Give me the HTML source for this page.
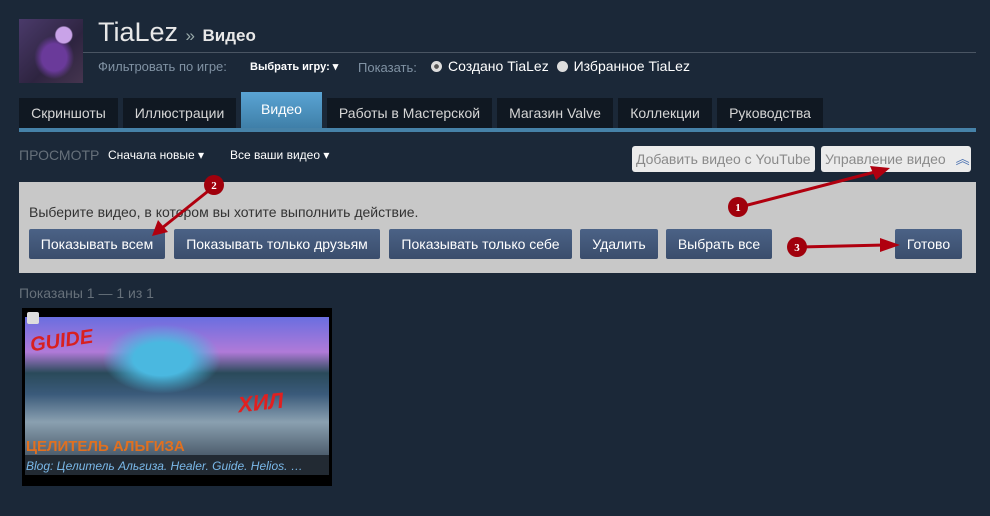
<!DOCTYPE html>
<html><head><meta charset="utf-8"><style>
*{margin:0;padding:0;box-sizing:border-box}
body{width:990px;height:516px;background:#1b2838;font-family:"Liberation Sans",Arial,sans-serif;position:relative;overflow:hidden;color:#fff}
.a{position:absolute;white-space:nowrap}
.tab{position:absolute;top:98px;height:30px;background:#101822;color:#d6d6d6;font-size:14px;text-align:center;line-height:30px}
.btn{position:absolute;top:229px;height:30px;background:linear-gradient(#4b6286,#3a4d6c);color:#fff;font-size:14px;text-align:center;line-height:30px;border-radius:2px}
.tb{position:absolute;top:146px;height:26px;background:#ebebeb;color:#8a8a8a;font-size:14px;line-height:26px;border-radius:3px;padding-left:4px}
.rad{display:inline-block;width:11px;height:11px;border-radius:50%;background:#ddd;vertical-align:-1px;margin-right:6px}
</style></head><body>
<div class="a" style="left:19px;top:19px;width:64px;height:64px;background:radial-gradient(circle at 70% 25%,#c9a3e8 0 12%,transparent 14%),radial-gradient(ellipse at 55% 60%,#6a3a9a 0 25%,transparent 40%),linear-gradient(135deg,#4a3a6a,#2e2440 60%,#45354f)"></div>
<div class="a" style="left:98px;top:17px;font-size:27px;color:#e8e8e8">TiaLez <span style="font-size:17px;color:#9aa">»</span> <b style="font-size:17px">Видео</b></div>
<div class="a" style="left:83px;top:52px;width:893px;height:1px;background:#4a5563"></div>
<div class="a" style="left:98px;top:59px;font-size:13px;color:#8092a3">Фильтровать по игре:</div>
<div class="a" style="left:250px;top:60px;font-size:11px;font-weight:bold;color:#fff">Выбрать игру: ▾</div>
<div class="a" style="left:358px;top:60px;font-size:13px;color:#8092a3">Показать:</div>
<div class="a" style="left:431px;top:58px;font-size:14px;color:#fff"><span class="rad" style="background:radial-gradient(#555 0 28%,#ddd 32%)"></span>Создано TiaLez <span class="rad" style="margin-left:4px"></span>Избранное TiaLez</div>
<div class="tab" style="left:19px;width:99px">Скриншоты</div>
<div class="tab" style="left:123px;width:113px">Иллюстрации</div>
<div class="tab" style="left:241px;top:92px;height:36px;width:81px;background:linear-gradient(#5aa4d4,#3f7fa8);color:#fff;line-height:34px">Видео</div>
<div class="tab" style="left:327px;width:165px">Работы в Мастерской</div>
<div class="tab" style="left:497px;width:116px">Магазин Valve</div>
<div class="tab" style="left:618px;width:94px">Коллекции</div>
<div class="tab" style="left:717px;width:106px">Руководства</div>
<div class="a" style="left:19px;top:128px;width:957px;height:4px;background:#4682a8"></div>
<div class="a" style="left:19px;top:147px;font-size:14px;color:#66707a">ПРОСМОТР</div>
<div class="a" style="left:108px;top:148px;font-size:12px;color:#fff">Сначала новые ▾</div>
<div class="a" style="left:230px;top:148px;font-size:12px;color:#fff">Все ваши видео ▾</div>
<div class="tb" style="left:632px;width:183px">Добавить видео с YouTube</div>
<div class="tb" style="left:821px;width:150px">Управление видео <span style="color:#4a70b0;margin-left:6px">︽</span></div>
<div class="a" style="left:19px;top:182px;width:957px;height:91px;background:#c8c8c8"></div>
<div class="a" style="left:29px;top:204px;font-size:14px;color:#333">Выберите видео, в котором вы хотите выполнить действие.</div>
<div class="btn" style="left:29px;width:136px">Показывать всем</div>
<div class="btn" style="left:174px;width:206px">Показывать только друзьям</div>
<div class="btn" style="left:389px;width:183px">Показывать только себе</div>
<div class="btn" style="left:580px;width:78px">Удалить</div>
<div class="btn" style="left:666px;width:106px">Выбрать все</div>
<div class="btn" style="left:895px;width:67px">Готово</div>
<div class="a" style="left:19px;top:285px;font-size:14px;color:#66707a">Показаны 1 — 1 из 1</div>
<div class="a" style="left:22px;top:308px;width:310px;height:178px;background:#000"></div>
<div class="a" style="left:25px;top:317px;width:304px;height:140px;background:radial-gradient(ellipse at 45% 30%,#4ab8e0 0 12%,transparent 25%),linear-gradient(#6a6ee0 0,#b07ad8 25%,#2a4a5a 40%,#3a5a7a 55%,#8aa0b0 75%,#4a5a6a 100%)"></div>
<div class="a" style="left:27px;top:312px;width:12px;height:12px;background:#ddd;border-radius:2px"></div>
<div class="a" style="left:30px;top:330px;font-size:20px;font-weight:bold;font-style:italic;color:#d82020;transform:rotate(-8deg)">GUIDE</div>
<div class="a" style="left:238px;top:390px;font-size:22px;font-weight:bold;font-style:italic;color:#e02020;transform:rotate(-6deg)">ХИЛ</div>
<div class="a" style="left:26px;top:438px;font-size:15px;font-weight:bold;color:#e07020">ЦЕЛИТЕЛЬ АЛЬГИЗА</div>
<div class="a" style="left:25px;top:455px;width:304px;height:20px;background:#222a33"></div>
<div class="a" style="left:26px;top:459px;font-size:12px;font-style:italic;color:#7ab8e8">Blog: Целитель Альгиза. Healer. Guide. Helios. …</div>
<svg class="a" style="left:0;top:0" width="990" height="516">
<g fill="#b0000f" stroke="#b0000f">
<line x1="740" y1="207" x2="875" y2="172" stroke-width="3"/>
<polygon points="890,168 870,166 876,180" stroke="none"/>
<line x1="800" y1="247" x2="885" y2="245" stroke-width="3"/>
<polygon points="900,245 880,238 880,252" stroke="none"/>
<line x1="212" y1="188" x2="162" y2="228" stroke-width="3"/>
<polygon points="152,236 158,220 168,232" stroke="none"/>
</g>
<g font-family="Liberation Serif" font-weight="bold" font-size="11" fill="#fff" text-anchor="middle">
<circle cx="738" cy="207" r="10" fill="#a0000c"/><text x="738" y="211">1</text>
<circle cx="214" cy="185" r="10" fill="#a0000c"/><text x="214" y="189">2</text>
<circle cx="797" cy="247" r="10" fill="#a0000c"/><text x="797" y="251">3</text>
</g>
</svg>
</body></html>
